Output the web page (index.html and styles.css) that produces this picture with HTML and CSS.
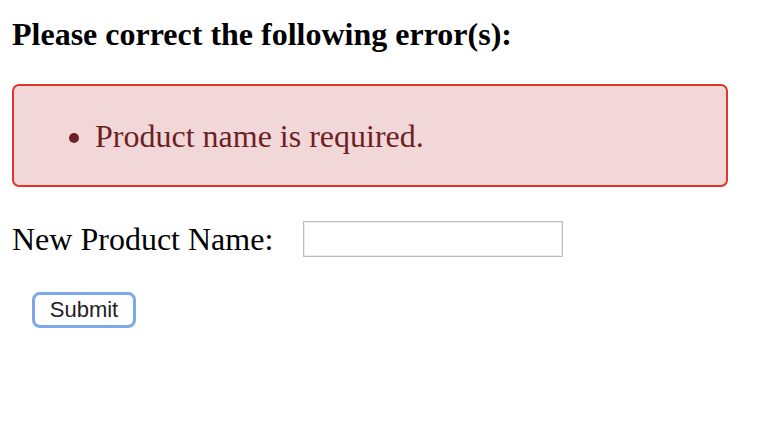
FILE: index.html
```html
<!DOCTYPE html>
<html>
<head>
<meta charset="utf-8">
<link rel="stylesheet" href="styles.css">
</head>
<body>
<h2 class="title">Please correct the following error(s):</h2>
<div class="errors">
  <ul class="error-list">
    <li>Product name is required.</li>
  </ul>
</div>
<form class="form">
  <div class="row">
    <label class="label" for="name">New Product Name:</label>
    <input class="input" id="name" type="text">
  </div>
  <div class="actions">
    <button class="btn" type="button">Submit</button>
  </div>
</form>
</body>
</html>
```
FILE: styles.css
```css
html, body { margin: 0; padding: 0; background: #fff; }
body {
  padding: 0 12px;
  font-family: "Liberation Serif", "Times New Roman", serif;
  color: #000;
}
.title {
  margin: 16px 0 0;
  font-size: 32px;
  line-height: 36px;
  font-weight: bold;
}
.errors {
  margin-top: 32px;
  width: 716px;
  height: 103px;
  box-sizing: border-box;
  background: #f2d7d9;
  border: 2px solid #e2342a;
  border-radius: 7px;
  display: flex;
  align-items: center;
  color: #6d1f24;
}
.error-list {
  margin: 0;
  padding-left: 81px;
  font-size: 32px;
  line-height: 36px;
}
.form { margin-top: 34px; }
.row {
  display: flex;
  align-items: center;
  gap: 30px;
}
.label {
  font-size: 32px;
  line-height: 36px;
}
.input {
  width: 260px;
  height: 36px;
  box-sizing: border-box;
  border: 1px solid #bdbdbd;
  box-shadow: inset 0 0 0 1px #ececec;
  padding: 0 4px;
  margin: 0;
}
.actions { margin-top: 35px; padding-left: 20px; }
.btn {
  width: 104px;
  height: 36px;
  box-sizing: border-box;
  background: #fff;
  border: 3px solid #7fa8ea;
  border-radius: 8px;
  font-family: "Liberation Sans", Arial, sans-serif;
  font-size: 22px;
  color: #222;
  padding: 0;
}
```
